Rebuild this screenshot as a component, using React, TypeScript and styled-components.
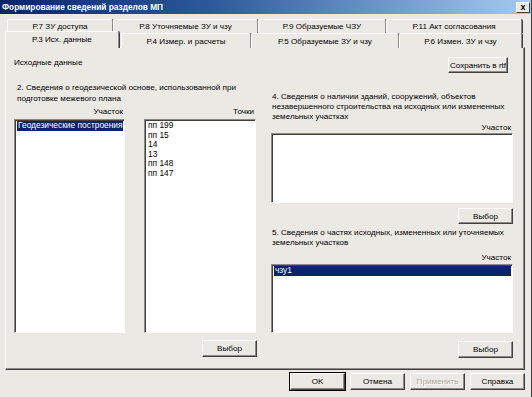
import React from "react";
import styled, { createGlobalStyle, css } from "styled-components";

const FACE = "#ebe9e4";
const SHADOW = "#8d8b86";
const DARK = "#404040";
const SELECT = "#0a246a";

const GlobalStyle = createGlobalStyle`
  html, body {
    margin: 0;
    padding: 0;
    background: ${FACE};
  }
  body {
    font-family: "Liberation Sans", Arial, sans-serif;
    font-size: 8.1px;
    color: #000;
  }
  #root {
    width: 532px;
    height: 397px;
    overflow: hidden;
  }
`;

const Window = styled.div`
  width: 532px;
  height: 397px;
  box-sizing: border-box;
  background: ${FACE};
  display: flex;
  flex-direction: column;
  border-right: 1px solid ${DARK};
`;

const TitleBar = styled.div`
  height: 14px;
  flex: none;
  display: flex;
  align-items: center;
  justify-content: space-between;
  padding: 0 1px 0 2px;
  background: linear-gradient(to right, #0a246a 0%, #2d5a9c 40%, #a6caf0 100%);
  color: #fff;
  font-weight: bold;
  font-size: 8.3px;
`;

const CloseButton = styled.div`
  width: 14px;
  height: 11px;
  box-sizing: border-box;
  background: ${FACE};
  border: 1px solid;
  border-color: #fff ${DARK} ${DARK} #fff;
  display: flex;
  align-items: center;
  justify-content: center;
  color: #000;
  font: bold 9px "Liberation Sans", Arial, sans-serif;
  line-height: 1;
`;

const Content = styled.div`
  flex: 1;
  display: flex;
  flex-direction: column;
  padding: 5px 6px 0 5px;
`;

const TabRow = styled.div<{ $front?: boolean }>`
  display: flex;
  height: ${(p) => (p.$front ? 15 : 14)}px;
  padding-left: ${(p) => (p.$front ? 0 : 2)}px;
  position: relative;
  z-index: ${(p) => (p.$front ? 2 : 1)};
`;

const Tab = styled.div<{ $w: number; $active?: boolean }>`
  width: ${(p) => p.$w}px;
  flex: none;
  box-sizing: border-box;
  display: flex;
  align-items: center;
  justify-content: center;
  white-space: nowrap;
  background: ${FACE};
  border-top: 1px solid #fff;
  border-left: 1px solid #fff;
  border-right: 1px solid ${SHADOW};
  box-shadow: 1px 0 0 ${DARK};
  border-radius: 2px 2px 0 0;
  ${(p) =>
    p.$active &&
    css`
      height: 17px;
      margin-top: -2px;
      margin-right: 2px;
      position: relative;
      z-index: 3;
      padding-bottom: 2px;
    `}
`;

const Panel = styled.div`
  height: 323px;
  flex: none;
  box-sizing: border-box;
  border: 1px solid;
  border-color: #fff ${DARK} ${DARK} #fff;
  box-shadow: inset -1px -1px 0 ${SHADOW};
  display: grid;
  grid-template-columns: 243px 242px;
  grid-template-rows: auto 1fr;
  column-gap: 14px;
  padding: 9px 0 0 8px;
  margin-top: -1px;
`;

const TopRow = styled.div`
  grid-column: 1 / span 2;
  display: flex;
  justify-content: space-between;
  align-items: flex-start;
  padding-right: 5px;
`;

const Caption = styled.div`
  line-height: 11px;
`;

const Column = styled.div<{ $top: number }>`
  display: flex;
  flex-direction: column;
  padding-top: ${(p) => p.$top}px;
`;

const Heading = styled.div<{ $lh: number; $indent?: number }>`
  line-height: ${(p) => p.$lh}px;
  padding-left: ${(p) => p.$indent ?? 1}px;
  white-space: nowrap;
`;

const Pair = styled.div`
  display: grid;
  grid-template-columns: 111px 112px;
  column-gap: 19px;
`;

const Label = styled.div<{ $mt: number }>`
  margin-top: ${(p) => p.$mt}px;
  line-height: 10px;
  text-align: right;
  padding-right: 2px;
`;

const ListBox = styled.div<{ $h: number; $mt?: number }>`
  height: ${(p) => p.$h}px;
  margin-top: ${(p) => p.$mt ?? 0}px;
  box-sizing: border-box;
  background: #fff;
  border: 1px solid;
  border-color: ${SHADOW} #fff #fff ${SHADOW};
  box-shadow: inset 1px 1px 0 ${DARK};
  padding: 1px 1px 0 2px;
  overflow: hidden;
`;

const ListItem = styled.div<{ $selected?: boolean }>`
  height: 9.5px;
  line-height: 9.5px;
  padding-left: 1px;
  white-space: nowrap;
  font-size: 8.4px;
  ${(p) =>
    p.$selected &&
    css`
      background: ${SELECT};
      color: #fff;
    `}
`;

const ButtonRow = styled.div<{ $mt: number }>`
  display: flex;
  justify-content: flex-end;
  margin-top: ${(p) => p.$mt}px;
`;

const Button = styled.button<{ $w?: number; $h?: number; $default?: boolean }>`
  width: ${(p) => p.$w ?? 55}px;
  height: ${(p) => p.$h ?? 17}px;
  box-sizing: border-box;
  padding: 0;
  white-space: nowrap;
  background: ${FACE};
  font: 8.1px "Liberation Sans", Arial, sans-serif;
  color: #000;
  border: 1px solid;
  border-color: #fff ${DARK} ${DARK} #fff;
  box-shadow: inset -1px -1px 0 ${SHADOW};
  ${(p) =>
    p.$default &&
    css`
      outline: 1px solid #000;
    `}
  &:disabled {
    color: #aca899;
    text-shadow: 1px 1px 0 #fff;
  }
`;

const Footer = styled.div`
  display: flex;
  justify-content: flex-end;
  gap: 5px;
  padding-top: 3px;
`;

const backTabs = [
  { title: "Р.7 ЗУ доступа", w: 106 },
  { title: "Р.8 Уточняемые ЗУ и чзу", w: 145 },
  { title: "Р.9 Образуемые ЧЗУ", w: 128 },
  { title: "Р.11 Акт согласования", w: 136 },
];

const frontTabs = [
  { title: "Р.3 Исх. данные", w: 114, active: true },
  { title: "Р.4 Измер. и расчеты", w: 130 },
  { title: "Р.5 Образуемые ЗУ и чзу", w: 148 },
  { title: "Р.6 Измен. ЗУ и чзу", w: 123 },
];

const points = ["пп 199", "пп 15", "14", "13", "пп 148", "пп 147"];

export default function App() {
  return (
    <>
      <GlobalStyle />
      <Window>
        <TitleBar>
          <span>Формирование сведений разделов МП</span>
          <CloseButton>x</CloseButton>
        </TitleBar>
        <Content>
          <TabRow>
            {backTabs.map((t) => (
              <Tab key={t.title} $w={t.w}>
                {t.title}
              </Tab>
            ))}
          </TabRow>
          <TabRow $front>
            {frontTabs.map((t) => (
              <Tab key={t.title} $w={t.w} $active={t.active}>
                {t.title}
              </Tab>
            ))}
          </TabRow>
          <Panel>
            <TopRow>
              <Caption>Исходные данные</Caption>
              <Button $w={60} $h={16}>
                Сохранить в rtf
              </Button>
            </TopRow>

            <Column $top={9}>
              <Heading $lh={11} $indent={3}>
                2. Сведения о геодезической основе, использованной при
                <br />
                подготовке межевого плана
              </Heading>
              <Pair>
                <Label $mt={3}>Участок</Label>
                <Label $mt={3}>Точки</Label>
              </Pair>
              <Pair>
                <ListBox $h={214} $mt={2}>
                  <ListItem $selected>Геодезические построения</ListItem>
                </ListBox>
                <ListBox $h={214} $mt={2}>
                  {points.map((p) => (
                    <ListItem key={p}>{p}</ListItem>
                  ))}
                </ListBox>
              </Pair>
              <ButtonRow $mt={7}>
                <Button>Выбор</Button>
              </ButtonRow>
            </Column>

            <Column $top={19}>
              <Heading $lh={10}>
                4. Сведения о наличии зданий, сооружений, объектов
                <br />
                незавершенного строительства на исходных или измененных
                <br />
                земельных участках
              </Heading>
              <Label $mt={1}>Участок</Label>
              <ListBox $h={70} />
              <ButtonRow $mt={5}>
                <Button $h={16}>Выбор</Button>
              </ButtonRow>
              <Heading $lh={10} style={{ marginTop: 4 }}>
                5. Сведения о частях исходных, измененных или уточняемых
                <br />
                земельных участков
              </Heading>
              <Label $mt={5}>Участок</Label>
              <ListBox $h={69} $mt={1}>
                <ListItem $selected>чзу1</ListItem>
              </ListBox>
              <ButtonRow $mt={8}>
                <Button>Выбор</Button>
              </ButtonRow>
            </Column>
          </Panel>
          <Footer>
            <Button $default>OK</Button>
            <Button>Отмена</Button>
            <Button disabled>Применить</Button>
            <Button>Справка</Button>
          </Footer>
        </Content>
      </Window>
    </>
  );
}
